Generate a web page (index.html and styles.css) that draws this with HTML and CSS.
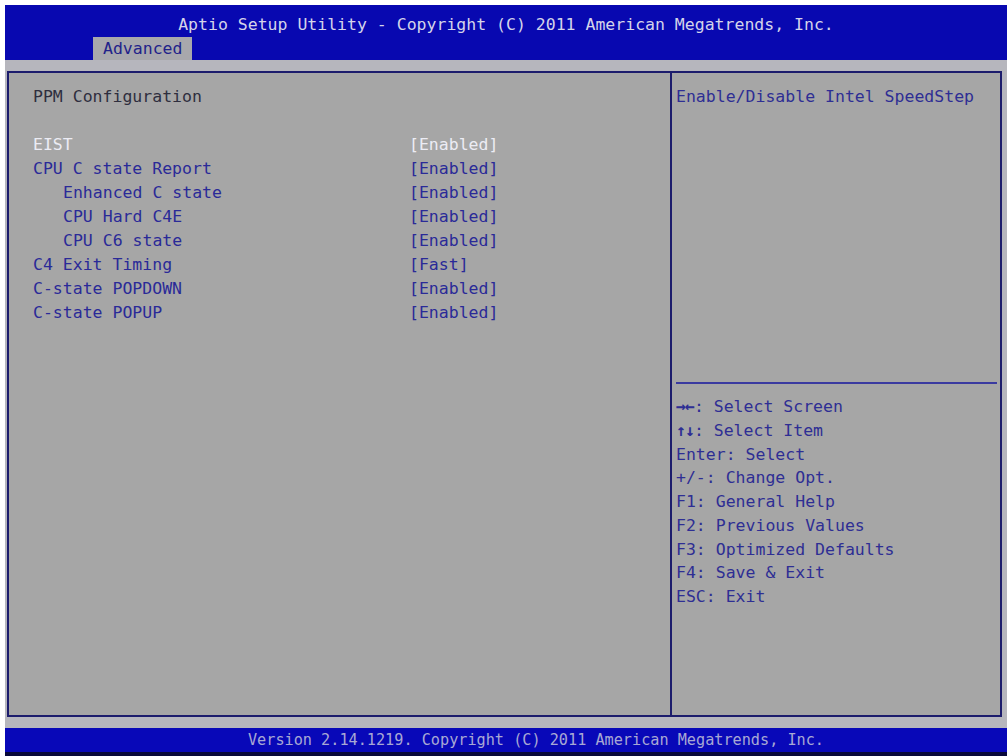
FILE: index.html
```html
<!doctype html>
<html lang="en">
<head>
<meta charset="utf-8" />
<title>Aptio Setup Utility - Advanced</title>
<link rel="stylesheet" href="styles.css">
</head>
<body>

<div class="screen">
	<header class="topbar">
		<div class="title">Aptio Setup Utility - Copyright (C) 2011 American Megatrends, Inc.</div>
		<nav class="tabs">
			<span class="tab active">Advanced</span>
		</nav>
	</header>

	<main class="frame">
		<section class="settings">
			<div class="heading">PPM Configuration</div>
			<div class="blank"></div>
			<div class="row selected"><span class="label">EIST</span><span class="value">[Enabled]</span></div>
			<div class="row"><span class="label">CPU C state Report</span><span class="value">[Enabled]</span></div>
			<div class="row sub"><span class="label">Enhanced C state</span><span class="value">[Enabled]</span></div>
			<div class="row sub"><span class="label">CPU Hard C4E</span><span class="value">[Enabled]</span></div>
			<div class="row sub"><span class="label">CPU C6 state</span><span class="value">[Enabled]</span></div>
			<div class="row"><span class="label">C4 Exit Timing</span><span class="value">[Fast]</span></div>
			<div class="row"><span class="label">C-state POPDOWN</span><span class="value">[Enabled]</span></div>
			<div class="row"><span class="label">C-state POPUP</span><span class="value">[Enabled]</span></div>
		</section>

		<aside class="help">
			<div class="help-text">Enable/Disable Intel SpeedStep</div>
			<hr class="divider" />
			<ul class="keys">
				<li><span class="arrows">→←</span>: Select Screen</li>
				<li><span class="arrows">↑↓</span>: Select Item</li>
				<li>Enter: Select</li>
				<li>+/-: Change Opt.</li>
				<li>F1: General Help</li>
				<li>F2: Previous Values</li>
				<li>F3: Optimized Defaults</li>
				<li>F4: Save &amp; Exit</li>
				<li>ESC: Exit</li>
			</ul>
		</aside>
	</main>

	<footer class="bottombar">Version 2.14.1219. Copyright (C) 2011 American Megatrends, Inc.</footer>
</div>

</body>
</html>
```

FILE: styles.css
```css
html, body {
	margin: 0;
	padding: 0;
	background-color: #fff;
}

.screen {
	margin: 5px 0 0 5px;
	height: 751px;
	background-color: #b6b6bd;
	display: flex;
	flex-direction: column;
	font-family: "DejaVu Sans Mono", "Liberation Mono", monospace;
	font-size: 16.5px;
	overflow: hidden;
}

/* top bar with title and menu tabs */
.topbar {
	height: 55px;
	background-color: #0808b0;
	display: flex;
	flex-direction: column;
	justify-content: space-between;
	flex-shrink: 0;
}
.title {
	color: #d4d4ea;
	text-align: center;
	padding-top: 10px;
	line-height: 20px;
}
.tabs {
	display: flex;
	padding-left: 88px;
}
.tab {
	height: 23px;
	line-height: 23px;
	padding: 0 10px;
	color: #22228a;
	background-color: #a8a8ac;
}

/* main bordered frame */
.frame {
	margin: 11px 5px 0 2px;
	height: 642px;
	border: 2px solid #1c1c6c;
	background-color: #a6a6a6;
	display: grid;
	grid-template-columns: 661px 1fr;
	flex-shrink: 0;
}

.settings {
	padding: 12px 0 0 24px;
	line-height: 24px;
}
.heading {
	color: #2e2e3e;
}
.blank {
	height: 24px;
}
.row {
	display: grid;
	grid-template-columns: 376px auto;
	color: #2a2a98;
}
.row.sub .label {
	padding-left: 30px;
}
.row.selected {
	color: #ececf4;
}

.help {
	border-left: 2px solid #1c1c6c;
	padding: 12px 0 0 4px;
	display: flex;
	flex-direction: column;
	color: #2e2e94;
	line-height: 24px;
}
.help-text {
	height: 297px;
}
.divider {
	border: none;
	border-top: 2px solid #3a3aa0;
	margin: 0 3px 11px 0;
}
.keys {
	list-style: none;
	margin: 0;
	padding: 0;
	line-height: 23.75px;
}
.arrows {
	font-weight: bold;
	letter-spacing: -1px;
}

/* bottom version bar */
.bottombar {
	margin-top: 11px;
	height: 24px;
	line-height: 24px;
	background-color: #0808b8;
	border-bottom: 4px solid #08083a;
	color: #a8a8d4;
	text-align: center;
	padding-left: 60px;
	font-size: 15.2px;
	flex-shrink: 0;
}
```
